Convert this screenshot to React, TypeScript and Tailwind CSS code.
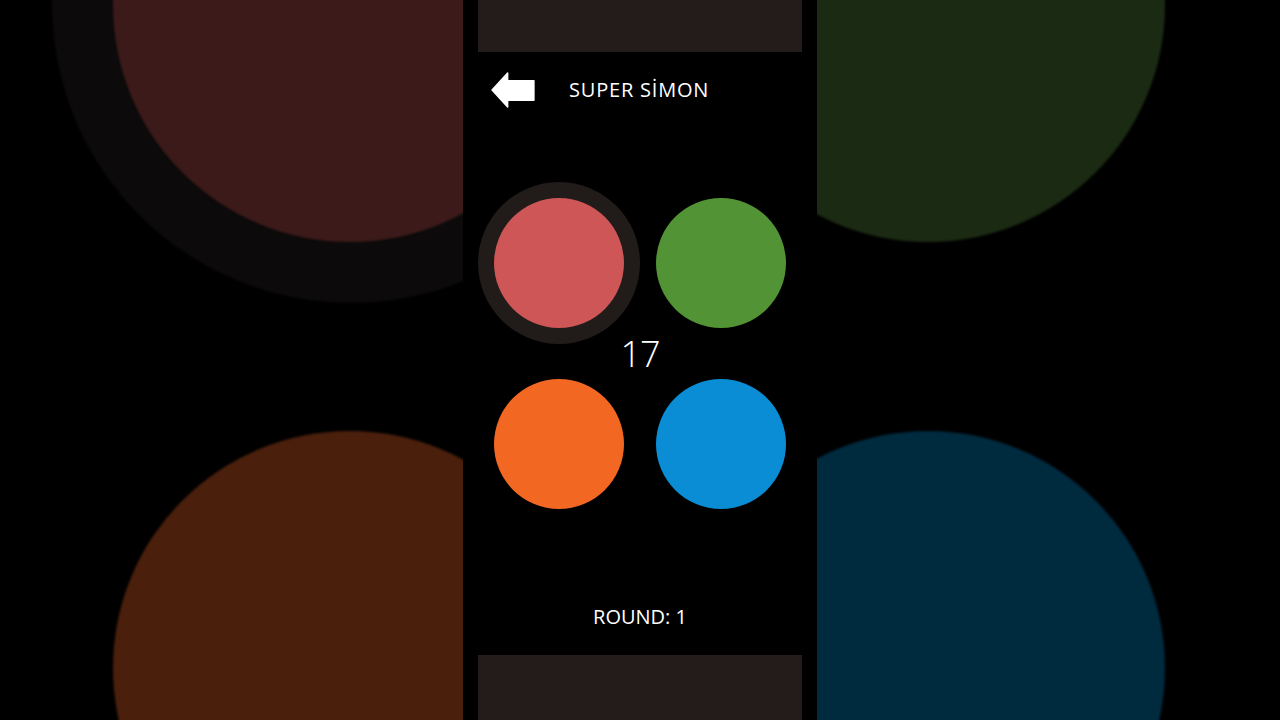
import React from "react";

const PADS = [
  { key: "red", color: "bg-[#cf5656]", active: true },
  { key: "green", color: "bg-[#529435]", active: false },
  { key: "orange", color: "bg-[#f26722]", active: false },
  { key: "blue", color: "bg-[#0a8dd5]", active: false },
];

function Pad({ color, active }: { color: string; active: boolean }) {
  return (
    <div
      className={`w-[130px] h-[130px] rounded-full ${color} ${
        active ? "shadow-[0_0_0_16px_#211b1a]" : ""
      }`}
    />
  );
}

function BackArrow() {
  return (
    <svg width="44" height="36" viewBox="-1 -1 45 37" aria-label="Back">
      <path
        d="M0 17.5 L16 0 L16 8 L43 8 L43 28 L16 28 L16 35 Z"
        fill="#ffffff"
        stroke="#ffffff"
        strokeWidth="1.5"
        strokeLinejoin="round"
      />
    </svg>
  );
}

export default function App() {
  return (
    <div className="relative w-full h-[720px] bg-black overflow-hidden font-['Open_Sans',sans-serif]">
      {/* blurred backdrop, the game zoomed in behind the video column */}
      <div className="absolute left-[52px] top-[-295px] w-[598px] h-[598px] rounded-full bg-[#0c0a0a] blur-[1px]" />
      <div className="absolute left-[113px] top-[-232px] w-[474px] h-[474px] rounded-full bg-[#3d1a1a] blur-[1px]" />
      <div className="absolute left-[691px] top-[-232px] w-[474px] h-[474px] rounded-full bg-[#1b2a12] blur-[1px]" />
      <div className="absolute left-[113px] top-[431px] w-[474px] h-[474px] rounded-full bg-[#4a1f0c] blur-[1px]" />
      <div className="absolute left-[691px] top-[431px] w-[474px] h-[474px] rounded-full bg-[#002a3e] blur-[1px]" />

      <div className="relative mx-auto w-[354px] h-[720px] bg-black flex flex-col text-white">
        <div className="mx-[15px] h-[52px] shrink-0 bg-[#231c1b]" />

        <div className="h-[76px] shrink-0 flex items-center pl-[28px]">
          <BackArrow />
          <span className="ml-[34px] text-[20px] leading-none tracking-[0.8px]">
            SUPER SİMON
          </span>
        </div>

        <div className="mt-[70px] ml-[31px] flex flex-col">
          <div className="flex gap-[32px]">
            <Pad {...PADS[0]} />
            <Pad {...PADS[1]} />
          </div>
          <div className="h-[51px] w-[292px] flex items-center justify-center">
            <span className="text-[36px] font-[350] leading-none tracking-[-1px]">17</span>
          </div>
          <div className="flex gap-[32px]">
            <Pad {...PADS[2]} />
            <Pad {...PADS[3]} />
          </div>
        </div>

        <div className="mt-[98px] text-center text-[20px] leading-none">ROUND: 1</div>

        <div className="mt-auto mx-[15px] h-[65px] shrink-0 bg-[#231c1b]" />
      </div>
    </div>
  );
}
